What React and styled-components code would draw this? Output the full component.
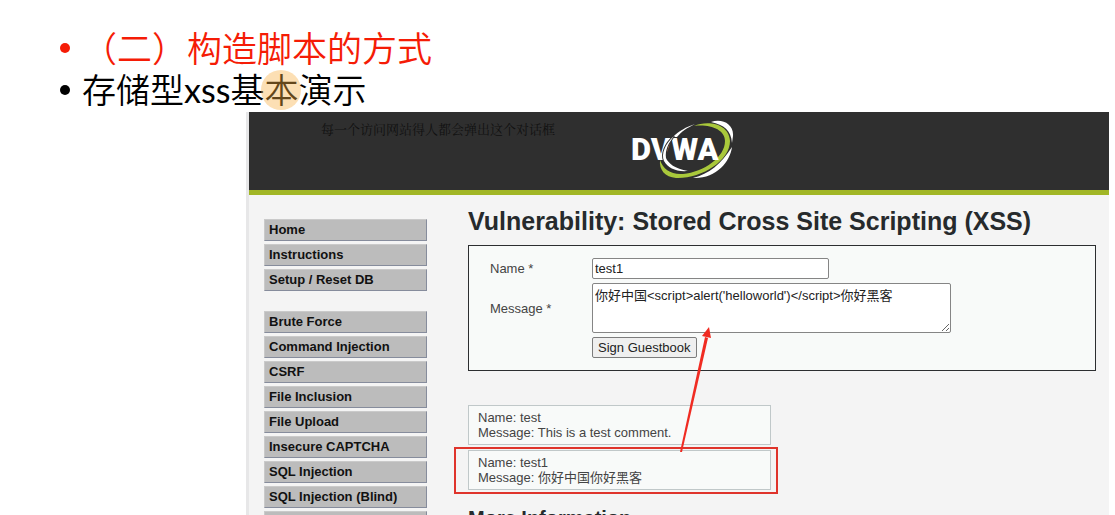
import React from "react";
import styled, { createGlobalStyle } from "styled-components";

const GlobalStyle = createGlobalStyle`
  *, *::before, *::after { box-sizing: border-box; }
  body {
    margin: 0;
    background: #fff;
    color: #444;
    font-family: "Liberation Sans", "Noto Sans CJK SC", sans-serif;
    font-size: 13px;
  }
`;

const Slide = styled.div`
  height: 100vh;
  overflow: hidden;
  padding: 27px 6px 0 0;
`;

const Bullets = styled.ul`
  list-style: none;
  margin: 0 0 1px;
  padding: 0 0 0 60px;
  font-family: Lato, "Noto Sans CJK SC", sans-serif;
  font-weight: 350;
`;

const Bullet = styled.li`
  display: flex;
  align-items: center;
  gap: 12px;
  height: 42px;
  color: ${(p) => (p.$accent ? "#f51c06" : "#000")};
  font-size: ${(p) => (p.$accent ? 35 : 34)}px;
  line-height: 42px;

  &::before {
    content: "";
    width: 10px;
    height: 10px;
    border-radius: 50%;
    background: currentColor;
  }
`;

const Latin = styled.span`
  font-weight: 400;
`;

const Pointer = styled.span`
  position: relative;

  &::after {
    content: "";
    position: absolute;
    z-index: 2;
    left: 50%;
    top: 50%;
    width: 40px;
    height: 40px;
    transform: translate(-50%, -50%);
    border-radius: 50%;
    background: rgba(247, 176, 68, 0.4);
  }
`;

const Panel = styled.div`
  margin-left: 246px;
  border-left: 3px solid #e7e7e8;
  background: #f4f4f4;
`;

const Header = styled.header`
  position: relative;
  display: flex;
  justify-content: center;
  align-items: center;
  height: 83px;
  padding-left: 6px;
  background: #2f2f2f;
  border-bottom: 5px solid #a1b626;
`;

const Caption = styled.p`
  position: absolute;
  left: 72px;
  top: 8px;
  margin: 0;
  font-family: "Noto Serif CJK SC", "Noto Sans CJK SC", serif;
  line-height: 18px;
  color: #111;
`;

const Columns = styled.div`
  display: flex;
  gap: 41px;
  padding: 0 13px 0 15px;
`;

const Nav = styled.nav`
  flex: none;
  width: 163px;
  padding-top: 24px;
`;

const NavGroup = styled.ul`
  list-style: none;
  margin: 0 0 20px;
  padding: 0;
`;

const NavItem = styled.li`
  height: 22px;
  margin-bottom: 3px;
`;

const NavLink = styled.a`
  display: block;
  padding-left: 4px;
  border: 1px solid;
  border-color: #cacaca #868c9c #868c9c #cacaca;
  background: #bcbcbc;
  color: #111;
  font-weight: bold;
  line-height: 20px;
  text-decoration: none;
`;

const Main = styled.main`
  position: relative;
  flex: 1;
  min-width: 0;
  padding-top: 10px;
`;

const Title = styled.h1`
  margin: 0 0 8px;
  color: #262a2c;
  font-size: 25px;
  line-height: 32px;
  white-space: nowrap;
`;

const Subtitle = styled.h2`
  margin: 16px 0 0;
  color: #262a2c;
  font-size: 20px;
  line-height: 24px;
`;

const Form = styled.form`
  display: grid;
  grid-template-columns: 102px 1fr;
  align-items: center;
  justify-items: start;
  row-gap: 4px;
  padding: 12px 12px 12px 21px;
  border: 1px solid #2c2e30;
  background: #f8faf9;
`;

const field = `
  border: 1px solid #858585;
  border-radius: 2px;
  background: #fff;
  color: #222;
  font-family: inherit;
  font-size: 13px;
  outline: none;
`;

const TextInput = styled.input`
  ${field}
  width: 237px;
  height: 21px;
  padding: 1px 2px;
`;

const TextArea = styled.textarea`
  ${field}
  display: block;
  width: 359px;
  height: 50px;
  padding: 3px 2px;
  line-height: 18px;
  overflow: hidden;
`;

const Submit = styled.button`
  grid-column: 2;
  height: 21px;
  padding: 0 5px;
  border: 1px solid #7c7c7c;
  border-radius: 2px;
  background: #efefef;
  color: #222;
  font-family: inherit;
  font-size: 13px;
  line-height: 18px;
`;

const Comments = styled.section`
  display: flex;
  flex-direction: column;
  gap: 5px;
  width: 303px;
  margin-top: 34px;
`;

const Comment = styled.div`
  position: relative;
  height: 40px;
  padding: 4px 9px;
  border: 1px solid #c0c8c9;
  background: #f8faf9;
  line-height: 15px;
`;

const Marker = styled.div`
  position: absolute;
  left: -15px;
  right: -8px;
  top: -4px;
  bottom: -5px;
  border: 2px solid #df342b;
`;

const Arrow = styled.svg`
  position: absolute;
  left: 205px;
  bottom: 37px;
`;

function Logo() {
  return (
    <svg width="106" height="64" viewBox="0 0 106 64" role="img" aria-label="DVWA">
      <path d="M82 3C93 -1 105 5 104 17L103 24C102 11 95 6 82 3Z" fill="#fff" />
      <path d="M103 28C101 43 87 60 64 59C80 55 92 45 103 28Z" fill="#fff" />
      <path
        d="M65 7C78 1 100 4 101 22C101 42 72 60 47 59C36 58 30 51 31 41C34 50 42 56 54 55C75 53 96 38 96 22C96 10 80 5 65 7Z"
        fill="#a9c83b"
      />
      <path d="M66 5C57 8 50 12 44 18L48 18C53 12 58 9 66 5Z" fill="#fff" />
      <text x="2" y="41" fontFamily="Roboto, sans-serif" fontSize="31" fontWeight="900" fill="#fff">
        DVWA
      </text>
      <path
        d="M45 17C36 25 32 35 35 42C39 49 47 53 59 52C46 50 39 44 37 39C36 31 39 25 45 17Z"
        fill="#fff"
        stroke="#2f2f2f"
        strokeWidth="2"
        paintOrder="stroke"
      />
    </svg>
  );
}

const NAV = [
  ["Home", "Instructions", "Setup / Reset DB"],
  [
    "Brute Force",
    "Command Injection",
    "CSRF",
    "File Inclusion",
    "File Upload",
    "Insecure CAPTCHA",
    "SQL Injection",
    "SQL Injection (Blind)",
    "",
  ],
];

export default function App() {
  return (
    <>
      <GlobalStyle />
      <Slide>
        <Bullets>
          <Bullet $accent>
            <span>（二）构造脚本的方式</span>
          </Bullet>
          <Bullet>
            <span>
              存储型<Latin>xss</Latin>基<Pointer>本</Pointer>演示
            </span>
          </Bullet>
        </Bullets>
        <Panel>
          <Header>
            <Caption>每一个访问网站得人都会弹出这个对话框</Caption>
            <Logo />
          </Header>
          <Columns>
            <Nav>
              {NAV.map((group) => (
                <NavGroup key={group[0]}>
                  {group.map((item) => (
                    <NavItem key={item}>
                      <NavLink href="#">{item || "\u00a0"}</NavLink>
                    </NavItem>
                  ))}
                </NavGroup>
              ))}
            </Nav>
            <Main>
              <Title>Vulnerability: Stored Cross Site Scripting (XSS)</Title>
              <Form onSubmit={(e) => e.preventDefault()}>
                <label htmlFor="name">Name *</label>
                <TextInput id="name" defaultValue="test1" />
                <label htmlFor="message">Message *</label>
                <TextArea
                  id="message"
                  spellCheck={false}
                  defaultValue="你好中国<script>alert('helloworld')</script>你好黑客"
                />
                <Submit type="submit">Sign Guestbook</Submit>
              </Form>
              <Comments>
                <Comment>
                  Name: test
                  <br />
                  Message: This is a test comment.
                </Comment>
                <Comment>
                  Name: test1
                  <br />
                  Message: 你好中国你好黑客
                  <Marker />
                  <Arrow width="44" height="128" viewBox="0 0 44 128" aria-hidden="true">
                    <path d="M6 128L31 13L34 14L8 128Z" fill="#f02b22" />
                    <path d="M35 3L37 14L28 12Z" fill="#f02b22" />
                  </Arrow>
                </Comment>
              </Comments>
              <Subtitle>More Information</Subtitle>
            </Main>
          </Columns>
        </Panel>
      </Slide>
    </>
  );
}
